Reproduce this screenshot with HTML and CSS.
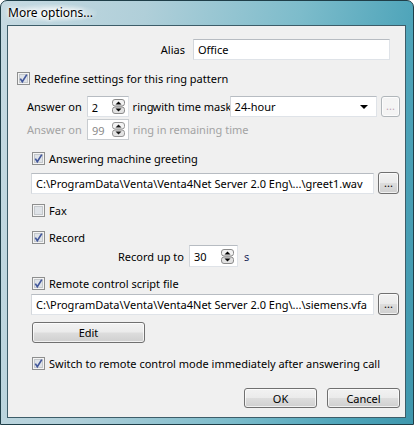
FILE: index.html
```html
<!DOCTYPE html>
<html lang="en">
<head>
  <meta charset="UTF-8">
  <title>More options...</title>
  <link rel="stylesheet" href="styles.css">
</head>
<body>
  <div class="window">
    <div class="titlebar"><span class="title">More options...</span></div>

    <div class="client">
      <!-- alias -->
      <div class="row alias-row">
        <span class="label-right">Alias</span>
        <div class="textbox alias">Office</div>
      </div>

      <!-- redefine -->
      <div class="row check-row redefine">
        <svg class="cb" width="13" height="13" viewBox="0 0 13 13"><rect x="0.5" y="0.5" width="12" height="12" fill="#f4f4f4" stroke="#8e8f8f"/><rect x="2.5" y="2.5" width="8" height="8" fill="#dfe3e8" stroke="#c4c8cc"/><path d="M3.3 6.6 L5.3 9.6 L9.8 2.6" fill="none" stroke="#42579b" stroke-width="1.7"/></svg>
        <span>Redefine settings for this ring pattern</span>
      </div>

      <!-- answer on -->
      <div class="row answer-row">
        <span class="answer-label">Answer on</span>
        <div class="textbox spin">
          <span class="spin-val">2</span>
          <svg class="spinner" width="13" height="15" viewBox="0 0 13 15"><rect x="0.5" y="0.5" width="12" height="6.5" rx="2.5" fill="#f2f2f2" stroke="#8a8a8a"/><rect x="0.5" y="8" width="12" height="6.5" rx="2.5" fill="#e2e2e2" stroke="#8a8a8a"/><path d="M3.5 5.5 H9.5 L6.5 2.5 Z" fill="#000"/><path d="M3.5 9.5 H9.5 L6.5 12.5 Z" fill="#000"/></svg>
        </div>
        <span class="ring-text">ring<span class="with">with time mask</span></span>
        <div class="textbox combo">24-hour<span class="combo-arrow"></span></div>
        <div class="btn btn-small disabled">...</div>
      </div>

      <div class="row answer-row second disabled-text">
        <span class="answer-label">Answer on</span>
        <div class="textbox spin dim">
          <span class="spin-val">99</span>
          <svg class="spinner" width="13" height="15" viewBox="0 0 13 15"><rect x="0.5" y="0.5" width="12" height="6.5" rx="2.5" fill="#f2f2f2" stroke="#8a8a8a"/><rect x="0.5" y="8" width="12" height="6.5" rx="2.5" fill="#e2e2e2" stroke="#8a8a8a"/><path d="M3.5 5.5 H9.5 L6.5 2.5 Z" fill="#000"/><path d="M3.5 9.5 H9.5 L6.5 12.5 Z" fill="#000"/></svg>
        </div>
        <span class="ring-text">ring in remaining time</span>
      </div>

      <!-- greeting -->
      <div class="row check-row indent greeting">
        <svg class="cb" width="13" height="13" viewBox="0 0 13 13"><rect x="0.5" y="0.5" width="12" height="12" fill="#f4f4f4" stroke="#8e8f8f"/><rect x="2.5" y="2.5" width="8" height="8" fill="#dfe3e8" stroke="#c4c8cc"/><path d="M3.3 6.6 L5.3 9.6 L9.8 2.6" fill="none" stroke="#42579b" stroke-width="1.7"/></svg>
        <span>Answering machine greeting</span>
      </div>
      <div class="row path-row path1">
        <div class="textbox path">C:\ProgramData\Venta\Venta4Net Server 2.0 Eng\...\greet1.wav</div>
        <div class="btn btn-small">...</div>
      </div>

      <!-- fax -->
      <div class="row check-row indent fax">
        <svg class="cb" width="13" height="13" viewBox="0 0 13 13"><rect x="0.5" y="0.5" width="12" height="12" fill="#f4f4f4" stroke="#8e8f8f"/><rect x="2.5" y="2.5" width="8" height="8" fill="#dfe3e8" stroke="#c4c8cc"/></svg>
        <span>Fax</span>
      </div>

      <!-- record -->
      <div class="row check-row indent record">
        <svg class="cb" width="13" height="13" viewBox="0 0 13 13"><rect x="0.5" y="0.5" width="12" height="12" fill="#f4f4f4" stroke="#8e8f8f"/><rect x="2.5" y="2.5" width="8" height="8" fill="#dfe3e8" stroke="#c4c8cc"/><path d="M3.3 6.6 L5.3 9.6 L9.8 2.6" fill="none" stroke="#42579b" stroke-width="1.7"/></svg>
        <span>Record</span>
      </div>
      <div class="row record-up">
        <span class="label-right rec-label">Record up to</span>
        <div class="textbox spin rec-spin">
          <span class="spin-val">30</span>
          <svg class="spinner" width="13" height="15" viewBox="0 0 13 15"><rect x="0.5" y="0.5" width="12" height="6.5" rx="2.5" fill="#f2f2f2" stroke="#8a8a8a"/><rect x="0.5" y="8" width="12" height="6.5" rx="2.5" fill="#e2e2e2" stroke="#8a8a8a"/><path d="M3.5 5.5 H9.5 L6.5 2.5 Z" fill="#000"/><path d="M3.5 9.5 H9.5 L6.5 12.5 Z" fill="#000"/></svg>
        </div>
        <span class="unit">s</span>
      </div>

      <!-- remote script -->
      <div class="row check-row indent remote">
        <svg class="cb" width="13" height="13" viewBox="0 0 13 13"><rect x="0.5" y="0.5" width="12" height="12" fill="#f4f4f4" stroke="#8e8f8f"/><rect x="2.5" y="2.5" width="8" height="8" fill="#dfe3e8" stroke="#c4c8cc"/><path d="M3.3 6.6 L5.3 9.6 L9.8 2.6" fill="none" stroke="#42579b" stroke-width="1.7"/></svg>
        <span>Remote control script file</span>
      </div>
      <div class="row path-row path2">
        <div class="textbox path">C:\ProgramData\Venta\Venta4Net Server 2.0 Eng\...\siemens.vfa</div>
        <div class="btn btn-small">...</div>
      </div>
      <div class="row edit-row">
        <div class="btn btn-edit">Edit</div>
      </div>

      <!-- switch -->
      <div class="row check-row indent switch">
        <svg class="cb" width="13" height="13" viewBox="0 0 13 13"><rect x="0.5" y="0.5" width="12" height="12" fill="#f4f4f4" stroke="#8e8f8f"/><rect x="2.5" y="2.5" width="8" height="8" fill="#dfe3e8" stroke="#c4c8cc"/><path d="M3.3 6.6 L5.3 9.6 L9.8 2.6" fill="none" stroke="#42579b" stroke-width="1.7"/></svg>
        <span>Switch to remote control mode immediately after answering call</span>
      </div>

      <div class="row buttons">
        <div class="btn btn-dlg">OK</div>
        <div class="btn btn-dlg">Cancel</div>
      </div>
    </div>
  </div>
</body>
</html>
```

FILE: styles.css
```css
body {
  margin: 0;
  font-family: "Noto Sans", "DejaVu Sans", sans-serif;
  font-size: 11px;
  color: #000;
}

.window {
  width: 414px;
  height: 425px;
  box-sizing: border-box;
  border: 1px solid #1f3e48;
  border-radius: 7px 7px 0 0;
  background: linear-gradient(100deg, #c6dae2 0%, #b0cfd9 30%, #7dbccb 62%, #4fa5ba 85%, #3f97ad 100%);
  display: flex;
  flex-direction: column;
  overflow: hidden;
}

.titlebar {
  height: 24px;
  display: flex;
  align-items: center;
  padding-left: 7px;
}

.title {
  font-size: 12px;
  color: #000;
  text-shadow: 0 0 6px #fff, 0 0 4px #fff, 0 0 2px #fff;
  background: radial-gradient(ellipse at center, rgba(255,255,255,0.55) 30%, rgba(255,255,255,0) 75%);
  padding: 0 4px 1px 0;
}

.client {
  flex: 1;
  margin: 0 7px 6px 6px;
  border: 1px solid #3d5d69;
  background: #f0f0f0;
  display: flex;
  flex-direction: column;
  padding-right: 5px;
}

.row {
  display: flex;
  align-items: center;
  white-space: nowrap;
}

.textbox {
  box-sizing: border-box;
  height: 21px;
  background: #fff;
  border: 1px solid #dfe3e8;
  border-top-color: #b7bcc2;
  border-left-color: #d3d7dc;
  display: flex;
  align-items: center;
  padding-left: 4px;
}

/* alias */
.alias-row {
  margin-top: 13px;
}
.label-right {
  width: 177px;
  text-align: right;
  margin-right: 8px;
}
.alias {
  width: 197px;
}

/* checkbox rows */
.check-row {
  height: 15px;
}
.cb {
  flex: none;
  margin-right: 4px;
}
.redefine {
  margin-top: 11px;
  padding-left: 9px;
}
.indent {
  padding-left: 24px;
}

/* answer rows */
.answer-row {
  margin-top: 10px;
  padding-left: 19px;
}
.answer-row.second {
  margin-top: 2px;
}
.answer-label {
  width: 60px;
}
.spin {
  width: 42px;
  justify-content: space-between;
  padding-right: 3px;
}
.spin-val {
  padding-top: 1px;
}
.ring-text {
  margin-left: 4px;
  width: 97px;
}
.with {
  margin-left: -1px;
}
.combo {
  width: 148px;
  justify-content: space-between;
  padding-right: 8px;
}
.combo-arrow {
  width: 0;
  height: 0;
  border-left: 4px solid transparent;
  border-right: 4px solid transparent;
  border-top: 4px solid #000;
}
.disabled-text {
  color: #a3a3a3;
}
.spin.dim {
  border-color: #c8ccd0;
  color: #8a8a8a;
}
.spin.dim .spinner {
  opacity: 0.9;
}

/* buttons */
.btn {
  box-sizing: border-box;
  border: 1px solid #707070;
  border-radius: 3px;
  background: linear-gradient(#f2f2f2 0%, #ebebeb 48%, #dddddd 52%, #cfcfcf 100%);
  box-shadow: inset 0 0 0 1px rgba(255,255,255,0.7);
  display: flex;
  align-items: center;
  justify-content: center;
}
.btn-small {
  width: 21px;
  height: 22px;
  margin-left: 4px;
  padding-bottom: 2px;
}
.btn-small.disabled {
  height: 21px;
  width: 19px;
  margin-left: 4px;
  border-color: #b0b6ba;
  background: #f4f4f4;
  color: #c2a6b4;
}

/* paths */
.greeting {
  margin-top: 11px;
}
.path-row {
  padding-left: 23px;
}
.path1 {
  margin-top: 6px;
}
.path {
  width: 343px;
  height: 21px;
}
.fax {
  margin-top: 9px;
}
.record {
  margin-top: 12px;
}
.record-up {
  margin-top: 0;
}
.rec-label {
  width: 176px;
  margin-right: 5px;
}
.rec-spin {
  width: 49px;
  height: 22px;
}
.unit {
  margin-left: 6px;
  color: #1c2a5a;
}
.remote {
  margin-top: 9px;
}
.path2 {
  margin-top: 2px;
}
.edit-row {
  margin-top: 7px;
  padding-left: 24px;
}
.btn-edit {
  width: 113px;
  height: 21px;
}
.switch {
  margin-top: 13px;
}

.buttons {
  margin-top: 17px;
  justify-content: flex-end;
  gap: 10px;
}
.btn-dlg {
  width: 73px;
  height: 20px;
}
```
